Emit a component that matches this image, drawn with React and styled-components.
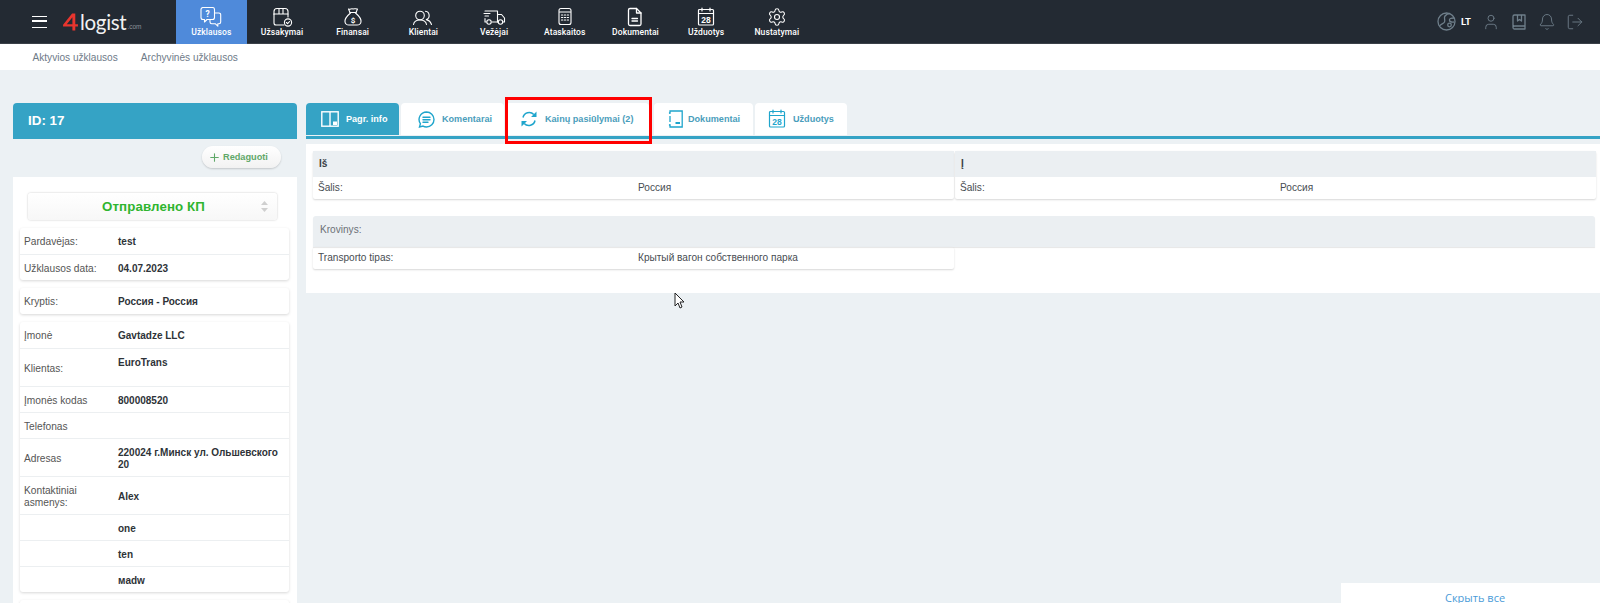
import React from "react";
import styled, { createGlobalStyle } from "styled-components";
import { User, Bell, LogOut, Settings, Plus } from "lucide-react";

const Global = createGlobalStyle`
  html, body { margin: 0; padding: 0; height: 603px; overflow: hidden; background: #ecf1f4; }
  * { box-sizing: border-box; }
  body { font-family: "Liberation Sans", Arial, sans-serif; color: #333; }
`;

const Page = styled.div`position: relative; width: 1600px; height: 603px; overflow: hidden;`;
const TopBar = styled.header`display: flex; height: 44px; background: #232a33; border-bottom: 1px solid #3a4048; color: #fff;`;
const Brand = styled.div`display: flex; align-items: center; width: 176px; padding-left: 32px;`;
const Burger = styled.span`display: block; width: 15px; height: 12px; margin-right: 15px; border-top: 1.5px solid #fff; border-bottom: 1.5px solid #fff; position: relative;
  &::after { content: ""; position: absolute; left: 0; right: 0; top: 3.5px; height: 1.5px; background: #fff; }`;
const LogoWord = styled.span`font-family: Lato, sans-serif; font-size: 20.500px; letter-spacing: -.3px; color: #f2f2f2; margin-left: 1px;`;
const LogoCom = styled.span`font-size: 6.500px; color: #8a9199; align-self: flex-end; margin: 0 0 13px 1px;`;
const NavList = styled.nav`display: flex;`;
const NavItem = styled.div`
  width: 70.700px; height: 44px; display: flex; flex-direction: column; align-items: center; padding-top: 7px;
  background: ${p => p.$active ? "#4f8ada" : "transparent"};
  font-family: Roboto, sans-serif; font-weight: 500; font-size: 8.500px; letter-spacing: .1px; color: #fff;
  svg { display: block; height: 20px; }
`;
const NavLabel = styled.span`margin-top: -1px; line-height: 12px; white-space: nowrap;`;
const TopRight = styled.div`margin-left: auto; display: flex; align-items: center; padding-right: 16px; color: #6f7f8b;`;
const Lang = styled.span`font-family: Roboto, sans-serif; font-weight: 700; font-size: 9.500px; color: #fff; margin: 0 11px 0 5px;`;
const RightIcon = styled.span`display: flex; margin-right: ${p => p.$gap ?? 10}px;`;

const SubBar = styled.div`display: flex; gap: 23px; height: 26px; background: #fff; padding-left: 32.500px; align-items: center; font-size: 10.100px; color: #6e7a88;`;

const Main = styled.main`display: flex; align-items: flex-start; padding: 33px 0 0 13px; gap: 9px;`;
const Side = styled.aside`width: 284px; flex: none;`;
const SideHead = styled.div`height: 36px; background: #35a3c5; border-radius: 4px 4px 0 0; color: #fff; font-weight: 700; font-size: 13.400px; line-height: 36px; padding-left: 15px;`;
const SideTools = styled.div`height: 38px; background: #ecf1f4; display: flex; justify-content: flex-end; padding: 7px 16px 0 0;`;
const EditBtn = styled.div`display: flex; align-items: center; gap: 2px; height: 22px; width: 79px; padding-left: 6px; border-radius: 11px; background: linear-gradient(#fff, #f2f2f2); box-shadow: 0 1px 2px rgba(0,0,0,.18); font-size: 9.200px; font-weight: 700; color: #5fa868;`;
const SideBody = styled.div`background: #fff; padding: 16px 8px 0 7px;`;
const StatusSelect = styled.div`position: relative; height: 27px; margin: 0 12px 8px 8px; border-radius: 3px; background: linear-gradient(#fff, #f7f7f7); box-shadow: 0 0 2px rgba(0,0,0,.25); text-align: center; font-size: 13.300px; font-weight: 700; line-height: 27px; color: #2fb52f; letter-spacing: .1px; padding-left: 2px;`;
const Spinner = styled.svg`position: absolute; right: 9px; top: 8px;`;
const Card = styled.div`background: #fff; border-radius: 3px; box-shadow: 0 1px 3px rgba(0,0,0,.16); margin-bottom: 8px;`;
const Row = styled.div`display: grid; grid-template-columns: 94px 1fr; align-items: ${p => p.$top ? "start" : "center"}; min-height: ${p => p.$h ?? 26}px; padding: 2px 3px 0 4px; border-top: ${p => p.$first ? "0" : "1px solid #eceff1"}; font-size: 10.200px; line-height: 12px; color: #555;`;
const Val = styled.b`font-weight: 700; font-size: 10px; color: #2e3338; ${p => p.$top ? "margin-top: 6px;" : ""}`;
const Lbl = styled.span`${p => p.$top ? "align-self: center;" : ""}`;

const Content = styled.section`flex: 1; min-width: 0;`;
const Tabs = styled.div`display: flex; gap: 2px; height: 35.500px; border-bottom: 3.500px solid #35a3c5; margin-bottom: 5.500px;`;
const Tab = styled.div`
  display: flex; align-items: center; flex: none; width: ${p => p.$w}px; height: 32px; padding-left: ${p => p.$pad}px; gap: ${p => p.$gap}px; margin-left: ${p => p.$ml ?? 0}px;
  border-radius: 4px 4px 0 0; background: ${p => p.$active ? "#35a3c5" : "#fff"}; color: ${p => p.$active ? "#fff" : "#4a9dbb"};
  font-size: 9.100px; font-weight: 700; white-space: nowrap;
  svg { color: ${p => p.$active ? "#fff" : "#1fa5cc"}; flex: none; }
`;
const Panel = styled.div`background: #fff; height: 149px; padding: 7px 5px 0 7px;`;
const Pair = styled.div`display: grid; grid-template-columns: 641px 641px; gap: 0 1px; margin-bottom: 17px;`;
const Block = styled.div`border-radius: 2px; box-shadow: 0 1px 2px rgba(0,0,0,.16);`;
const BlockHead = styled.div`height: 26px; background: #ebeff2; padding-left: 6px; line-height: 26px; font-size: 10.100px; font-weight: 700; color: #3a4045;`;
const BlockRow = styled.div`display: grid; grid-template-columns: 320px 1fr; height: 22px; padding-left: 5px; line-height: 21px; font-size: 10.100px; color: #484d52;`;
const Wide = styled.div`height: 31px; background: #ebeff2; border-radius: 3px 3px 0 0; box-shadow: 0 1px 1px rgba(0,0,0,.1); padding-left: 7px; line-height: 27px; font-size: 10.100px; color: #6b7177;`;
const HalfBlock = styled(Block)`width: 641px;`;

const RedBox = styled.div`position: absolute; left: 505px; top: 97px; width: 147px; height: 47px; border: 3px solid #f00; pointer-events: none;`;
const Pointer = styled.svg`position: absolute; left: 674px; top: 292px;`;
const HideAll = styled.div`position: absolute; right: 0; bottom: 0; width: 259px; height: 20px; background: #fff; padding-left: 104px; padding-top: 8px; font-family: "Open Sans", sans-serif; font-size: 11px; line-height: 13px; color: #4a9bd8;`;

const Ic = ({ children, w = 24, h = 20 }) => (
  <svg width={w} height={h} viewBox={`0 0 ${w} ${h}`} fill="none" stroke="currentColor" strokeWidth="1.100" strokeLinecap="round" strokeLinejoin="round">{children}</svg>
);

const RequestsIcon = () => <Ic>
  <path d="M4 .5h9.500a2 2 0 0 1 2 2v8a2 2 0 0 1-2 2H8L5.500 15v-2.500H4a2 2 0 0 1-2-2v-8a2 2 0 0 1 2-2z" />
  <path d="M15.500 6H20a1.700 1.700 0 0 1 1.700 1.700v7.300A1.700 1.700 0 0 1 20 16.700h-1.200V19.200l-2.600-2.500h-3.500a1.700 1.700 0 0 1-1.700-1.700v-2" />
  <text x="8.700" y="9.700" fontSize="8.500" fontWeight="700" fontFamily="Roboto" fill="currentColor" stroke="none" textAnchor="middle">?</text>
</Ic>;
const OrdersIcon = () => <Ic>
  <path d="M4 7V4.500A3 3 0 0 1 7 1.500h8a3 3 0 0 1 3 3V10" />
  <path d="M4 7h14M9 1.500V7M13 1.500V7" />
  <path d="M4 7v9a2 2 0 0 0 2 2h8" />
  <circle cx="18" cy="15.500" r="3.600" /><path d="M16.400 15.500l1.200 1.200 2-2.200" />
</Ic>;
const MoneyIcon = () => <Ic>
  <path d="M9 5.500 7.500 2c1.500.8 3-.8 4.500 0 1.500-.8 3 0 4.500 0L15 5.500" />
  <path d="M9 5.500h6" />
  <path d="M9.500 6C6.500 8.500 3.500 12 4 15c.4 2.200 2 3 4 3h8c2 0 3.600-.8 4-3 .5-3-2.500-6.500-5.500-9" />
  <text x="12" y="15.500" fontSize="8" fontWeight="700" fontFamily="Roboto" fill="currentColor" stroke="none" textAnchor="middle">$</text>
</Ic>;
const ClientsIcon = () => <Ic>
  <circle cx="9" cy="8.500" r="4.300" />
  <path d="M2.500 17.500c.5-2.800 3-4.500 6.500-4.500s6 1.700 6.500 4.500" />
  <path d="M14.500 4.300a4.300 4.300 0 0 1 .8 8.300c2.800.7 4.500 2.500 5.200 4.900" />
</Ic>;
const TruckIcon = () => <Ic>
  <path d="M3 4h12.500v11H10M4 15H3v-3.500M2 6.500h6M3 9h3.500" />
  <path d="M15.500 7.500h4l3 3.500v4H21" />
  <circle cx="7" cy="15" r="2.200" /><circle cx="18.500" cy="15" r="2.200" /><path d="M16.300 15h-.8" />
</Ic>;
const CalcIcon = () => <Ic>
  <rect x="6" y="1.500" width="12" height="16" rx="2" />
  <path d="M6.500 5h11" />
  <path d="M8.500 8h1.200M11.400 8h1.200M14.300 8h1.200M8.500 10.500h1.200M11.400 10.500h1.200M14.300 10.500h1.200M8.500 13h1.200M11.400 13h1.200M14.300 13h1.200" strokeWidth="1.200" />
</Ic>;
const DocIcon = () => <Ic>
  <path d="M7 1.500h6.500l4.500 4.500v11a1.500 1.500 0 0 1-1.500 1.500H7A1.500 1.500 0 0 1 5.500 17V3A1.500 1.500 0 0 1 7 1.500z" strokeWidth="1.300" />
  <path d="M13.500 1.500V6H18M9 11.500h5.500M9 14h5.500" strokeWidth="1.300" />
</Ic>;
const CalendarIcon = ({ w = 24, h = 20 }) => <svg width={w} height={h} viewBox="0 0 24 20" fill="none" stroke="currentColor" strokeWidth="1.200" strokeLinecap="round">
  <rect x="4.500" y="2.500" width="15" height="15.500" rx="1" />
  <path d="M4.500 6.500h15M8 1v3M16 1v3" />
  <text x="12" y="15.800" fontSize="8.500" fontWeight="700" fontFamily="Liberation Sans" fill="currentColor" stroke="none" textAnchor="middle">28</text>
</svg>;
const GlobeIcon = () => <svg width="19" height="19" viewBox="0 0 19 19" fill="none" stroke="currentColor" strokeWidth="1.300">
  <circle cx="9.500" cy="9.500" r="8.500" />
  <path d="M2.500 14c2-3 4-2 5-4S6.500 6 8 4s3.500-2.500 5-2.500M17 6c-3 0-5 .5-4.500 2.500s2.800 1.500 4.500 1.500" />
  <circle cx="12.500" cy="13" r="1.800" />
</svg>;
const BookIcon = () => <svg width="18" height="18" viewBox="0 0 18 18" fill="none" stroke="currentColor" strokeWidth="1.300" strokeLinejoin="round">
  <path d="M3 14.500V3.500A1.500 1.500 0 0 1 4.500 2H15v14H4.500A1.500 1.500 0 0 1 3 14.500A1.500 1.500 0 0 1 4.500 13H15" />
  <path d="M7.500 2v6l2-1.500 2 1.500V2" />
</svg>;
const LayoutIcon = () => <svg width="18" height="16" viewBox="0 0 18 16" fill="none" stroke="currentColor" strokeWidth="1.400">
  <rect x=".8" y=".8" width="16.400" height="14.400" />
  <path d="M9 1v14" />
  <rect x="12" y="10.500" width="4" height="3.500" fill="currentColor" stroke="none" />
</svg>;
const ChatIcon = () => <svg width="17" height="17" viewBox="0 0 17 17" fill="none" stroke="currentColor" strokeWidth="1.400" strokeLinecap="round">
  <path d="M8.500 1a7.500 7.500 0 0 1 0 15c-1.300 0-2.500-.3-3.500-.9L1.500 16l.9-3.300A7.500 7.500 0 0 1 8.500 1z" />
  <path d="M5 6.200h7M5 8.700h7M5 11.200h5" />
</svg>;
const SyncIcon = () => <svg width="18" height="18" viewBox="0 0 18 18" fill="none" stroke="currentColor" strokeWidth="1.500">
  <path d="M3 7.500A6.300 6.300 0 0 1 13.800 4.500" />
  <path d="M15 10.500A6.300 6.300 0 0 1 4.200 13.500" />
  <path d="M16.500 1.500v5.500H11zM1.500 16.500V11H7z" fill="currentColor" stroke="none" />
</svg>;
const FileTabIcon = () => <svg width="15" height="18" viewBox="0 0 15 18" fill="none" stroke="currentColor" strokeWidth="1.300">
  <path d="M2 2.500V1h12.200v16H2v-1.500M2 6v6" />
  <circle cx="1.800" cy="3" r="1" fill="currentColor" stroke="none" /><circle cx="1.800" cy="15" r="1" fill="currentColor" stroke="none" />
  <rect x="7.500" y="12" width="4.500" height="2" fill="currentColor" stroke="none" />
</svg>;

const nav = [
  ["Užklausos", <RequestsIcon />, true], ["Užsakymai", <OrdersIcon />], ["Finansai", <MoneyIcon />], ["Klientai", <ClientsIcon />],
  ["Vežėjai", <TruckIcon />], ["Ataskaitos", <CalcIcon />], ["Dokumentai", <DocIcon />], ["Užduotys", <CalendarIcon />],
  ["Nustatymai", <Settings size={20} strokeWidth={1.300} />],
];

const companyRows = [
  { l: "Įmonė", v: "Gavtadze LLC", first: true },
  { l: "Klientas:", v: "EuroTrans", h: 38, top: true },
  { l: "Įmonės kodas", v: "800008520" },
  { l: "Telefonas", v: "" },
  { l: "Adresas", v: "220024 г.Минск ул. Ольшевского 20", h: 38 },
  { l: "Kontaktiniai asmenys:", v: "Alex", h: 38 },
  { l: "", v: "one" }, { l: "", v: "ten" }, { l: "", v: "мadw" },
];

export default function App() {
  return (
    <Page>
      <Global />
      <TopBar>
        <Brand>
          <Burger />
          <svg width="17" height="20" viewBox="0 0 16 18"><path d="M9.500 1 1 11.500v1.800h14v-2.300H4.500L9.800 4.500V17h2.700V1z" fill="#e8352e" /></svg>
          <LogoWord>logist</LogoWord><LogoCom>.com</LogoCom>
        </Brand>
        <NavList>
          {nav.map(([label, icon, active]) => (
            <NavItem key={label} $active={active}>{icon}<NavLabel>{label}</NavLabel></NavItem>
          ))}
        </NavList>
        <TopRight>
          <GlobeIcon />
          <Lang>LT</Lang>
          <RightIcon><User size={18} strokeWidth={1.200} /></RightIcon>
          <RightIcon><BookIcon /></RightIcon>
          <RightIcon><Bell size={18} strokeWidth={1.200} /></RightIcon>
          <RightIcon $gap={0}><LogOut size={18} strokeWidth={1.200} /></RightIcon>
        </TopRight>
      </TopBar>
      <SubBar><span>Aktyvios užklausos</span><span>Archyvinės užklausos</span></SubBar>
      <Main>
        <Side>
          <SideHead>ID: 17</SideHead>
          <SideTools><EditBtn><Plus size={13} strokeWidth={2} />Redaguoti</EditBtn></SideTools>
          <SideBody>
            <StatusSelect>Отправлено КП
              <Spinner width="7" height="11" viewBox="0 0 7 11" fill="#cfcfcf"><path d="M3.500 0 7 4H0zM0 7h7l-3.500 4z" /></Spinner>
            </StatusSelect>
            <Card>
              <Row $first><Lbl>Pardavėjas:</Lbl><Val>test</Val></Row>
              <Row><Lbl>Užklausos data:</Lbl><Val>04.07.2023</Val></Row>
            </Card>
            <Card><Row $first><Lbl>Kryptis:</Lbl><Val>Россия - Россия</Val></Row></Card>
            <Card>
              {companyRows.map(r => (
                <Row key={r.l + r.v} $first={r.first} $h={r.h} $top={r.top}><Lbl $top={r.top}>{r.l}</Lbl><Val $top={r.top}>{r.v}</Val></Row>
              ))}
            </Card>
            <Card><Row $first /></Card>
          </SideBody>
        </Side>
        <Content>
          <Tabs>
            <Tab $active $w={93} $pad={15} $gap={7}><LayoutIcon />Pagr. info</Tab>
            <Tab $w={103} $pad={17} $gap={7}><ChatIcon />Komentarai</Tab>
            <Tab $w={143} $pad={14} $gap={7}><SyncIcon />Kainų pasiūlymai (2)</Tab>
            <Tab $w={99} $ml={3} $pad={14} $gap={5}><FileTabIcon />Dokumentai</Tab>
            <Tab $w={92} $pad={10} $gap={4}><CalendarIcon w={24} h={20} />Užduotys</Tab>
          </Tabs>
          <Panel>
            <Pair>
              <Block><BlockHead>Iš</BlockHead><BlockRow><span>Šalis:</span><span>Россия</span></BlockRow></Block>
              <Block><BlockHead>Į</BlockHead><BlockRow><span>Šalis:</span><span>Россия</span></BlockRow></Block>
            </Pair>
            <Wide>Krovinys:</Wide>
            <HalfBlock><BlockRow><span>Transporto tipas:</span><span>Крытый вагон собственного парка</span></BlockRow></HalfBlock>
          </Panel>
        </Content>
      </Main>
      <RedBox />
      <Pointer width="12" height="18" viewBox="0 0 12 18"><path d="M1 1v13l3-3 2 5 2-1-2-5h4z" fill="#fff" stroke="#222" strokeWidth="1" /></Pointer>
      <HideAll>Скрыть все</HideAll>
    </Page>
  );
}
